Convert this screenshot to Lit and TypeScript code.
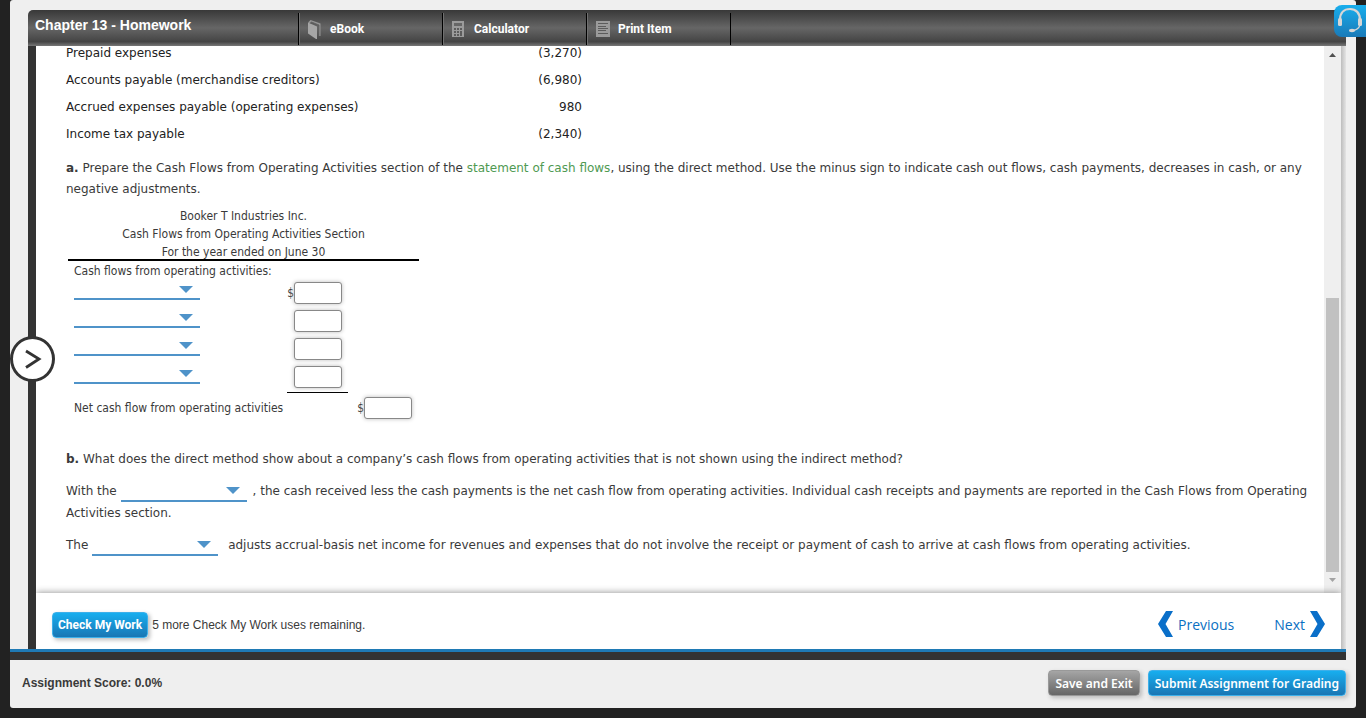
import { LitElement, html, css, svg } from "lit";
import { customElement } from "lit/decorators.js";

const icons = {
  book: svg`<path d="M0 3.500 9 7.500V20L8 20 0 14.500z" fill="#a6a6a6"/><path d="M0 3.500 2.500 1 12.500 4.500V17H11V6L3.500 3 2 4.300z" fill="#959595"/><path d="M2 4.200 3.500 3 11 6V17" fill="none" stroke="#5f5f5f" stroke-width="0.800"/>`,
  calc: svg`<path d="M0 2h12v16H0z" fill="#9b9b9b"/><path d="M2 4h8v3H2z" fill="#666"/><path d="M2 9h2v2H2zM5 9h2v2H5zM8 9h2v2H8zM2 12h2v2H2zM5 12h2v2H5zM2 15h2v2H2zM5 15h2v2H5zM8 12h2v5H8z" fill="#5c5c5c"/>`,
  page: svg`<path d="M0 2h14v16H0z" fill="#9b9b9b"/><path d="M2 4.500h10M2 7.500h8M2 9.500h10M2 11.500h8M2 14.500h10" stroke="#5c5c5c" stroke-width="1"/>`,
};

const accounts = [
  ["Prepaid expenses", "(3,270)"],
  ["Accounts payable (merchandise creditors)", "(6,980)"],
  ["Accrued expenses payable (operating expenses)", "980"],
  ["Income tax payable", "(2,340)"],
];

const tools = [
  { label: "eBook", icon: icons.book },
  { label: "Calculator", icon: icons.calc },
  { label: "Print Item", icon: icons.page },
];

@customElement("app-root")
export class AppRoot extends LitElement {
  static styles = css`
    :host {
      display: block;
      height: 100vh;
      box-sizing: border-box;
      padding: 0 10px 10px;
      background: #222;
      font-family: "Liberation Sans", Arial, sans-serif;
      font-size: 12px;
      color: #3a3a3a;
    }
    * { box-sizing: border-box; }
    button, select, input { font: inherit; margin: 0; }
    a { text-decoration: none; }
    .shell {
      position: relative;
      height: 100%;
      display: flex;
      flex-direction: column;
      background: #efefef;
      border-radius: 3px;
    }
    .frame {
      flex: 1;
      min-height: 0;
      margin: 10px 10px 0 18px;
      display: flex;
      flex-direction: column;
    }
    .bar {
      flex: none;
      height: 36px;
      display: flex;
      align-items: stretch;
      border-radius: 5px 0 0 0;
      background: linear-gradient(#383838, #666 50%, #444 88%, #777);
      color: #fff;
    }
    .title {
      width: 270px;
      margin: 0;
      padding-left: 7px;
      font-size: 14px;
      line-height: 30px;
    }
    .tools { display: flex; margin-top: 3px; height: 32px; border-left: 1px solid #000; }
    .tool {
      width: 144px;
      display: flex;
      align-items: center;
      gap: 8px;
      padding: 0 0 0 8px;
      border: 0;
      border-left: 1px solid #707070;
      border-right: 1px solid #000;
      background: none;
      color: #fff;
      font-family: Roboto, sans-serif;
      font-weight: bold;
      text-align: left;
    }
    .tool svg { width: 14px; height: 20px; }
    .body {
      flex: 1;
      min-height: 0;
      display: flex;
      flex-direction: column;
      border-left: 8px solid #333;
      padding-right: 5px;
      background: linear-gradient(to left, #e4e4e4, #bdbdbd 5px);
    }
    .view { flex: 1; min-height: 0; display: flex; background: #fff; }
    .content {
      flex: 1;
      overflow: hidden;
      padding: 0 10px 0 30px;
      font-family: Verdana, "DejaVu Sans", sans-serif;
    }
    .scroll {
      width: 17px;
      display: flex;
      flex-direction: column;
      align-items: center;
      background: #efefef;
      padding: 7px 0 11px;
    }
    .scroll svg { width: 7px; height: 4px; }
    .track { flex: 1; width: 13px; margin: 7px 0 6px; display: flex; flex-direction: column; justify-content: flex-end; }
    .thumb { height: 54%; background: #c1c1c1; }
    .accounts { margin-top: -7px; border-collapse: collapse; color: #222; }
    .accounts td { height: 27px; padding: 0; }
    .accounts .name { width: 416px; }
    .accounts .num { width: 100px; text-align: right; }
    p { margin: 0; }
    .ask-a { margin-top: 11px; line-height: 21px; }
    .term { color: #4f9a52; }
    .statement {
      width: 351px;
      margin: 7px 0 0 2px;
      border-collapse: collapse;
      table-layout: fixed;
      font-family: Tahoma, "DejaVu Sans Condensed", "DejaVu Sans", sans-serif;
    }
    .statement caption { height: 54px; line-height: 18px; border-bottom: 2px solid #000; }
    .statement td { padding: 0; height: 28px; }
    .statement .lead td { height: 18px; padding-top: 3px; line-height: 15px; }
    .statement td:first-child { padding-left: 6px; }
    .c1 { width: 219px; }
    .c2 { width: 61px; }
    .cash { display: flex; align-items: center; justify-content: flex-end; padding-right: 6px; }
    .statement .row td:first-child { vertical-align: top; }
    .statement .last td { height: 29px; }
    .statement .last td:nth-child(2) { border-bottom: 1px solid #000; }
    .statement .net td { height: 32px; }
    .net .cash { padding-right: 7px; }
    .amount {
      width: 48px;
      height: 22px;
      padding: 0 4px;
      border: 1px solid #888;
      border-radius: 3px;
      background: #fff;
      box-shadow: 0 0 4px #bbb;
    }
    .pick {
      appearance: none;
      display: block;
      width: 126px;
      height: 21px;
      padding: 0 26px 0 4px;
      border: 0;
      border-bottom: 2px solid #4f93c9;
      border-radius: 0;
      background: url("data:image/svg+xml,%3Csvg xmlns='http://www.w3.org/2000/svg' width='14' height='7'%3E%3Cpath d='M0 0h14L7 7z' fill='%234f93c9'/%3E%3C/svg%3E") no-repeat right 7px top 7px;
    }
    .inline { display: inline-block; vertical-align: baseline; height: 22px; margin-right: 6px; }
    .wide { margin-right: 10px; }
    .ask-b { margin-top: 25px; line-height: 20px; }
    .fill-1 { margin-top: 11px; line-height: 22px; }
    .fill-2 { margin-top: 10px; line-height: 22px; }
    .actions {
      position: relative;
      flex: none;
      height: 56px;
      display: flex;
      align-items: center;
      padding: 8px 16px 0;
      background: #fff;
      box-shadow: 0 0 7px #888;
      clip-path: inset(-8px 0 0 0);
    }
    .btn {
      height: 26px;
      padding: 0 6px;
      border: 1px solid #3db0ea;
      border-radius: 4px;
      background: linear-gradient(#17aeef, #1a76b4);
      color: #fff;
      box-shadow: 2px 2px 4px #bbb;
      font-family: "Noto Sans", sans-serif;
      font-weight: 600;
      white-space: nowrap;
    }
    .check { font-family: Roboto, sans-serif; font-weight: bold; padding: 0 5px; }
    .grey { border-color: #999; background: linear-gradient(#a5a5a5, #666); }
    .left { margin-left: 4px; }
    .pager { margin-left: auto; padding-bottom: 2px; display: flex; gap: 40px; }
    .pager a {
      display: flex;
      align-items: center;
      gap: 5px;
      color: #0a6fc2;
      font-family: "Open Sans", sans-serif;
      font-size: 14px;
    }
    .pager svg { width: 15px; height: 26px; }
    .rule { flex: none; height: 11px; margin-right: 10px; background: #333; border-top: 3px solid #1f7ab5; }
    .foot { flex: none; height: 48px; display: flex; align-items: center; gap: 8px; padding: 0 10px 2px 12px; }
    .score { margin-right: auto; font-weight: bold; }
    .open {
      position: absolute;
      left: 0;
      top: 336px;
      width: 45px;
      height: 46px;
      padding: 0;
      border: 3px solid #333;
      border-radius: 50%;
      background: #fff;
    }
    .open svg { display: block; width: 39px; height: 40px; }
    .help {
      position: absolute;
      right: -10px;
      top: 5px;
      width: 32px;
      height: 32px;
      padding: 0;
      border: 0;
      border-radius: 8px 0 0 8px;
      background: linear-gradient(#18aeed, #1a7ab8);
    }
    .help svg { display: block; width: 32px; height: 32px; }
  `;

  private pick(label: string, extra = "") {
    return html`<select class="pick ${extra}" aria-label=${label}><option></option></select>`;
  }

  private amount(label: string, sign = "") {
    return html`<div class="cash">${sign}<input class="amount" type="text" aria-label=${label} /></div>`;
  }

  render() {
    return html`
      <div class="shell">
        <div class="frame">
          <header class="bar">
            <h1 class="title">Chapter 13 - Homework</h1>
            <nav class="tools">
              ${tools.map((t) => html`<button class="tool"><svg viewBox="0 0 14 20" aria-hidden="true">${t.icon}</svg>${t.label}</button>`)}
            </nav>
          </header>
          <div class="body">
            <div class="view">
              <main class="content">
                <table class="accounts">
                  ${accounts.map(([name, value]) => html`<tr><td class="name">${name}</td><td class="num">${value}</td></tr>`)}
                </table>
                <p class="ask-a"><b>a.</b> Prepare the Cash Flows from Operating Activities section of the <a class="term" href="#">statement of cash flows</a>, using the direct method. Use the minus sign to indicate cash out flows, cash payments, decreases in cash, or any negative adjustments.</p>
                <table class="statement">
                  <caption>Booker T Industries Inc.<br />Cash Flows from Operating Activities Section<br />For the year ended on June 30</caption>
                  <colgroup><col class="c1" /><col class="c2" /><col /></colgroup>
                  <tr class="lead"><td colspan="3">Cash flows from operating activities:</td></tr>
                  ${[1, 2, 3, 4].map((n) => html`<tr class=${n === 4 ? "row last" : "row"}>
                    <td>${this.pick(`Item ${n}`)}</td><td>${this.amount(`Amount ${n}`, n === 1 ? "$" : "")}</td><td></td>
                  </tr>`)}
                  <tr class="net"><td colspan="2">Net cash flow from operating activities</td><td>${this.amount("Net cash flow", "$")}</td></tr>
                </table>
                <p class="ask-b"><b>b.</b> What does the direct method show about a company’s cash flows from operating activities that is not shown using the indirect method?</p>
                <p class="fill-1">With the ${this.pick("Method", "inline")}, the cash received less the cash payments is the net cash flow from operating activities. Individual cash receipts and payments are reported in the Cash Flows from Operating Activities section.</p>
                <p class="fill-2">The ${this.pick("Other method", "inline wide")}adjusts accrual-basis net income for revenues and expenses that do not involve the receipt or payment of cash to arrive at cash flows from operating activities.</p>
              </main>
              <div class="scroll" aria-hidden="true">
                <svg viewBox="0 0 7 4"><path d="M0 4h7L3.500 0z" fill="#505050" /></svg>
                <div class="track"><div class="thumb"></div></div>
                <svg viewBox="0 0 7 4"><path d="M0 0h7L3.500 4z" fill="#a3a3a3" /></svg>
              </div>
            </div>
            <div class="actions">
              <button class="btn check">Check My Work</button>
              <span class="left">5 more Check My Work uses remaining.</span>
              <nav class="pager">
                <a href="#"><svg viewBox="0 0 15 26" aria-hidden="true"><path d="M8 0h7L7.500 13 15 26H8L0 13z" fill="#0a6fc9" /></svg>Previous</a>
                <a href="#">Next<svg viewBox="0 0 15 26" aria-hidden="true"><path d="M7 0H0l7.500 13L0 26h7l8-13z" fill="#0a6fc9" /></svg></a>
              </nav>
            </div>
          </div>
        </div>
        <div class="rule"></div>
        <footer class="foot">
          <span class="score">Assignment Score: 0.0%</span>
          <button class="btn grey">Save and Exit</button>
          <button class="btn">Submit Assignment for Grading</button>
        </footer>
        <button class="open" aria-label="Open panel">
          <svg viewBox="0 0 39 40"><path d="M13 12 26 20 13 28.500" fill="none" stroke="#333" stroke-width="2.800" /></svg>
        </button>
        <button class="help" aria-label="Help">
          <svg viewBox="0 0 32 32"><g fill="none" stroke="#d6d6d6"><path d="M6 15C6 8 10 4 16 4s10 4 10 11" stroke-width="2.200" /><path d="M26 20c-1 3-3 5-7 5.500" stroke-width="1.200" /></g><rect x="4" y="13" width="4" height="8" rx="1.500" fill="#d6d6d6" /><rect x="24" y="13" width="4" height="8" rx="1.500" fill="#d6d6d6" /><ellipse cx="18" cy="25.500" rx="3" ry="1.700" fill="#d6d6d6" /></svg>
        </button>
      </div>
    `;
  }
}
